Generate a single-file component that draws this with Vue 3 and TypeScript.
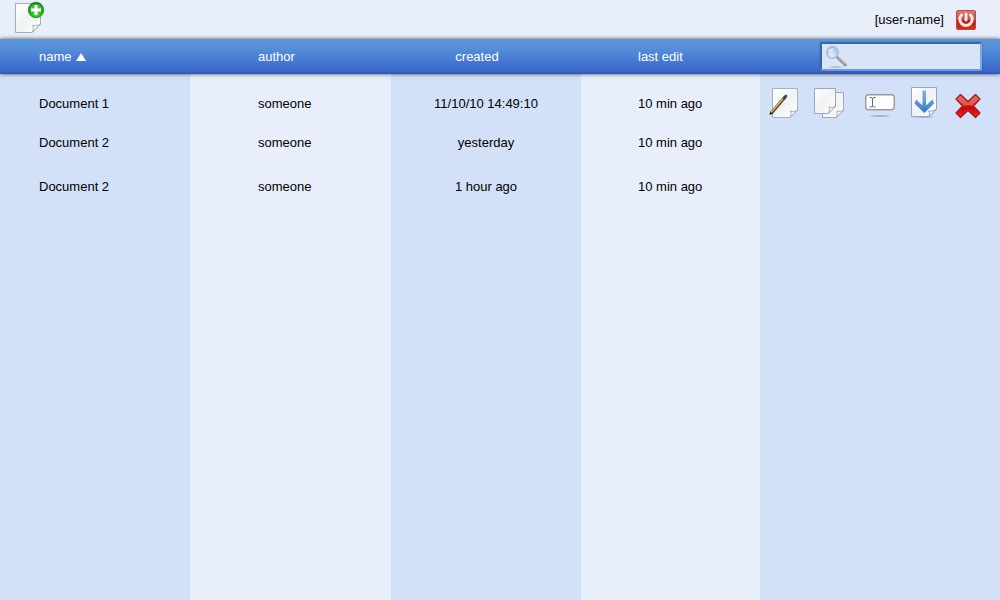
<script setup lang="ts">
import { computed, ref } from 'vue'

interface DocumentEntry {
  id: number
  name: string
  author: string
  created: string
  edited: string
}

const documents: DocumentEntry[] = [
  { id: 1, name: 'Document 1', author: 'someone', created: '11/10/10 14:49:10', edited: '10 min ago' },
  { id: 2, name: 'Document 2', author: 'someone', created: 'yesterday', edited: '10 min ago' },
  { id: 3, name: 'Document 2', author: 'someone', created: '1 hour ago', edited: '10 min ago' },
]

const selectedId = ref(1)
const query = ref('')

const visible = computed(() =>
  documents.filter((d) => d.name.toLowerCase().includes(query.value.trim().toLowerCase())),
)
</script>

<template>
  <div class="page">
    <svg class="defs" width="0" height="0" aria-hidden="true">
      <defs>
        <linearGradient id="paper" x1="0" y1="0" x2="1" y2="1">
          <stop offset="0" stop-color="#ffffff" />
          <stop offset="0.5" stop-color="#f1f2f2" />
          <stop offset="1" stop-color="#ffffff" />
        </linearGradient>
        <linearGradient id="curl" x1="0" y1="0" x2="1" y2="1">
          <stop offset="0" stop-color="#d4d7da" />
          <stop offset="0.35" stop-color="#ffffff" />
          <stop offset="0.6" stop-color="#e4e6e8" />
        </linearGradient>
        <radialGradient id="green" cx="0.5" cy="0.75" r="0.7">
          <stop offset="0" stop-color="#4be02d" />
          <stop offset="0.6" stop-color="#1fae19" />
          <stop offset="1" stop-color="#0a8410" />
        </radialGradient>
        <linearGradient id="red" x1="0" y1="0" x2="0" y2="1">
          <stop offset="0" stop-color="#e08078" />
          <stop offset="0.48" stop-color="#d0483c" />
          <stop offset="0.52" stop-color="#bb1708" />
          <stop offset="1" stop-color="#d93018" />
        </linearGradient>
        <linearGradient id="cross" x1="0" y1="0" x2="0" y2="1">
          <stop offset="0" stop-color="#e45050" />
          <stop offset="0.45" stop-color="#dc3535" />
          <stop offset="0.55" stop-color="#c80808" />
          <stop offset="1" stop-color="#ee2020" />
        </linearGradient>
        <linearGradient id="arrow" x1="0" y1="0" x2="0" y2="1">
          <stop offset="0" stop-color="#82b1e8" />
          <stop offset="1" stop-color="#3278cc" />
        </linearGradient>
        <radialGradient id="lens" cx="0.4" cy="0.7" r="0.7">
          <stop offset="0" stop-color="#e4f1ff" />
          <stop offset="1" stop-color="#9bc0ec" />
        </radialGradient>
        <radialGradient id="floor">
          <stop offset="0" stop-color="#445878" stop-opacity="0.5" />
          <stop offset="1" stop-color="#445878" stop-opacity="0" />
        </radialGradient>
      </defs>
    </svg>

    <header class="topbar">
      <button type="button" class="icon-button" aria-label="New document">
        <svg viewBox="0 0 32 34" width="32" height="34" aria-hidden="true">
          <path d="M1.5 3.5H26.5V24L18 32.5H1.5Z" fill="url(#paper)" stroke="#a3adb8" />
          <path d="M18 32.5C19.5 30 19.5 27 18.8 25.3C21 26 24.5 25.5 26.5 24Z" fill="url(#curl)" stroke="#a3adb8" />
          <circle cx="22" cy="10" r="7.700" fill="url(#green)" stroke="#14851a" stroke-width="0.8" />
          <path d="M15.5 8.5A6.8 6.8 0 0 1 28.5 8.5Q22 11 15.5 8.500Z" fill="#fff" opacity="0.22" />
          <path d="M20.5 5h3v3.500H27v3h-3.500V15h-3v-3.500H17v-3h3.500Z" fill="#fff" />
        </svg>
      </button>
      <div class="account">
        <span>[user-name]</span>
        <button type="button" class="icon-button" aria-label="Log out">
          <svg viewBox="0 0 20 20" width="20" height="20" aria-hidden="true">
            <rect x="0.5" y="0.5" width="19" height="19" rx="1.5" fill="url(#red)" stroke="#b54b45" />
            <path d="M5.500 5A6.200 6.200 0 1 0 14.500 5" fill="none" stroke="#f4e9e8" stroke-width="3" stroke-linecap="round" />
            <path d="M10 4V10" stroke="#f4e9e8" stroke-width="3" stroke-linecap="round" />
          </svg>
        </button>
      </div>
    </header>

    <main class="content">
      <table>
        <colgroup>
          <col class="col-name" />
          <col class="col-author" />
          <col class="col-created" />
          <col class="col-edited" />
          <col class="col-tools" />
        </colgroup>
        <thead>
          <tr>
            <th class="name" scope="col" aria-sort="ascending">
              <button type="button" class="sort">
                name
                <svg viewBox="0 0 10 8" width="10" height="8" aria-hidden="true"><path d="M5 0L10 8H0Z" fill="#fff" /></svg>
              </button>
            </th>
            <th class="author" scope="col"><button type="button" class="sort">author</button></th>
            <th class="created" scope="col"><button type="button" class="sort">created</button></th>
            <th class="edited" scope="col"><button type="button" class="sort">last edit</button></th>
            <th class="tools" scope="col">
              <label class="search">
                <svg viewBox="0 0 24 24" width="24" height="24" aria-hidden="true">
                  <ellipse cx="11" cy="22" rx="10" ry="1" fill="url(#floor)" />
                  <path d="M12.5 12.5L20.5 20" stroke="#858589" stroke-width="2.600" stroke-linecap="round" />
                  <path d="M12.5 12L20.5 19.5" stroke="#d4d4d8" stroke-width="1" />
                  <circle cx="7.5" cy="7.5" r="5.800" fill="url(#lens)" stroke="#a9b3c4" stroke-width="1.2" />
                  <path d="M3.5 7A4.2 4.2 0 0 1 9 3.6Q7 7 3.5 7Z" fill="#fff" opacity="0.6" />
                </svg>
                <input v-model="query" type="search" aria-label="Search documents" />
              </label>
            </th>
          </tr>
        </thead>
        <tbody>
          <tr v-for="doc in visible" :key="doc.id" @click="selectedId = doc.id">
            <td class="name">{{ doc.name }}</td>
            <td class="author">{{ doc.author }}</td>
            <td class="created">{{ doc.created }}</td>
            <td class="edited">{{ doc.edited }}</td>
            <td class="tools">
              <div v-if="doc.id === selectedId" class="actions">
                <button type="button" class="icon-button" aria-label="Edit">
                  <svg viewBox="0 0 32 32" width="32" height="32" aria-hidden="true">
                    <path d="M4.5 1.5H29.5V23L22 30.5H4.5Z" fill="url(#paper)" stroke="#a3b0c4" />
                    <path d="M22 30.5C23.5 28 23 26 22.5 24C25 24.8 28 24.5 29.5 23Z" fill="url(#curl)" stroke="#a3adb8" />
                    <path d="M3 26.5L17.500 9.5" stroke="#4a3f2c" stroke-width="3.200" />
                    <path d="M3 25.800L16 10.800" stroke="#dcb548" stroke-width="1.500" />
                    <path d="M16 11.5L18 9" stroke="#4c4640" stroke-width="2.600" stroke-linecap="round" />
                    <path d="M1.500 28L2.2 24.5L4.8 26.7Z" fill="#1c1a18" />
                  </svg>
                </button>
                <button type="button" class="icon-button" aria-label="Duplicate">
                  <svg viewBox="0 0 32 32" width="32" height="32" aria-hidden="true">
                    <path d="M8.5 5.5H29.5V23L22.5 30.5H8.5Z" fill="url(#paper)" stroke="#9aa8bc" />
                    <path d="M22.5 30.5C23.5 28 23.5 26 23 24C25 24.8 28 24.5 29.5 23Z" fill="url(#curl)" stroke="#a3adb8" />
                    <path d="M0.5 1.5H21.5V19L14.5 26.5H0.5Z" fill="url(#paper)" stroke="#9aa8bc" />
                    <path d="M14.5 26.5C15.5 24 15.5 22 15 20C17 20.8 20 20.5 21.5 19Z" fill="url(#curl)" stroke="#a3adb8" />
                  </svg>
                </button>
                <button type="button" class="icon-button" aria-label="Rename">
                  <svg viewBox="0 0 32 32" width="32" height="32" aria-hidden="true">
                    <ellipse cx="20" cy="29" rx="13" ry="1.5" fill="url(#floor)" />
                    <rect x="5.7" y="7.7" width="28.6" height="15" rx="3" fill="#fff" stroke="#9a9a9e" stroke-width="1.4" />
                    <path d="M9.5 10.5h1.5l1.5 0.8l1.5-0.8h1.5M12.5 11v8.5M9.5 20h1.5l1.5-0.8l1.5 0.8h1.5" fill="none" stroke="#68686c" />
                  </svg>
                </button>
                <button type="button" class="icon-button" aria-label="Download">
                  <svg viewBox="0 0 32 32" width="32" height="32" aria-hidden="true">
                    <ellipse cx="17" cy="30" rx="13" ry="1.3" fill="url(#floor)" />
                    <path d="M5.5 0.5H30.5V22L23 29.5H5.5Z" fill="url(#paper)" stroke="#98a6bb" />
                    <path d="M16.5 3.500h3.500V18.500L26.500 12.500L28 16.500L18.300 26L8.500 16.500L10 12.500L16.500 18.500Z" fill="url(#arrow)" />
                    <path d="M23 29.5C23.8 27 23.5 25 22.5 24C25.5 24.5 29 23.5 30.5 22Z" fill="url(#curl)" stroke="#98a3ae" />
                  </svg>
                </button>
                <button type="button" class="icon-button" aria-label="Delete">
                  <svg viewBox="0 0 32 32" width="32" height="32" aria-hidden="true">
                    <path
                      d="M8.5 7.5L16 14.5L23.5 7.5L28 12L21.500 19L28 26L23.5 30.5L16 23.5L8.5 30.5L4 26L10.500 19L4 12Z"
                      fill="url(#cross)" stroke="#a51c1c" stroke-width="1.2" stroke-linejoin="round"
                    />
                    <path d="M8.500 9L16 16L23.500 9L26.500 12L20.500 18H11.500L5.500 12Z" fill="#fff" opacity="0.15" />
                  </svg>
                </button>
              </div>
            </td>
          </tr>
        </tbody>
      </table>
    </main>
  </div>
</template>

<style>
body {
  margin: 0;
}
</style>

<style scoped>
.page {
  display: flex;
  flex-direction: column;
  min-height: 100vh;
  background: #e8effb;
  color: #000;
  font: 13px/16px "Liberation Sans", Arial, Helvetica, sans-serif;
}

.defs {
  position: absolute;
}

button {
  margin: 0;
  padding: 0;
  border: 0;
  background: none;
  color: inherit;
  font: inherit;
  cursor: pointer;
}

.icon-button {
  display: block;
  flex: none;
}

.icon-button svg {
  display: block;
  overflow: visible;
}

.topbar {
  display: flex;
  align-items: center;
  justify-content: space-between;
  height: 39px;
  padding: 0 24px 0 14px;
  box-sizing: border-box;
}

.topbar > .icon-button {
  align-self: flex-start;
}

.account {
  display: flex;
  align-items: center;
  gap: 12px;
}

.content {
  flex: 1;
  background: linear-gradient(
    to right,
    #d3e1f8 19%,
    #e8effb 19% 39.1%,
    #d3e1f8 39.1% 58.1%,
    #e8effb 58.1% 76%,
    #d3e1f8 76%
  );
}

table {
  width: 100%;
  table-layout: fixed;
  border-collapse: separate;
  border-spacing: 0;
}

.col-name,
.col-created {
  width: 19%;
}

.col-author {
  width: 20.1%;
}

.col-edited {
  width: 17.9%;
}

.col-tools {
  width: 24%;
}

th,
td {
  padding: 0;
  text-align: left;
  font-weight: normal;
  white-space: nowrap;
}

thead tr {
  height: 35px;
  background: linear-gradient(#5c96dc, #5590d8 25%, #3a68cc 92%, #2c57ad);
  box-shadow: 0 0 4px rgba(0, 0, 0, 0.7);
  color: #fff;
}

.sort {
  display: inline-flex;
  align-items: center;
  gap: 4px;
}

.name {
  padding-left: 39px;
}

.author {
  padding-left: 68px;
}

.edited {
  padding-left: 57px;
}

.created {
  text-align: center;
}

th.created {
  padding-right: 18px;
}

th.tools {
  padding-right: 18px;
}

.search {
  position: relative;
  display: block;
  width: 162px;
  margin-left: auto;
}

.search svg {
  position: absolute;
  top: 3px;
  left: 5px;
}

.search input {
  display: block;
  width: 100%;
  height: 29px;
  box-sizing: border-box;
  margin: 0;
  padding: 0 6px 0 30px;
  border: 2px solid;
  border-color: #3b66a4 #7fa6e6 #7595dc #3b66a4;
  border-radius: 2px;
  outline: 0;
  background: #d8e4f8;
  box-shadow: 0 0 2px rgba(40, 70, 130, 0.6);
  color: #000;
  font: inherit;
}

tbody tr {
  height: 38px;
}

tbody tr:first-child {
  height: 50px;
}

tbody tr:first-child td {
  padding-top: 10px;
}

tbody tr:last-child {
  height: 50px;
}

.actions {
  display: flex;
  gap: 14px;
  padding: 0 0 2px 8px;
}
</style>
